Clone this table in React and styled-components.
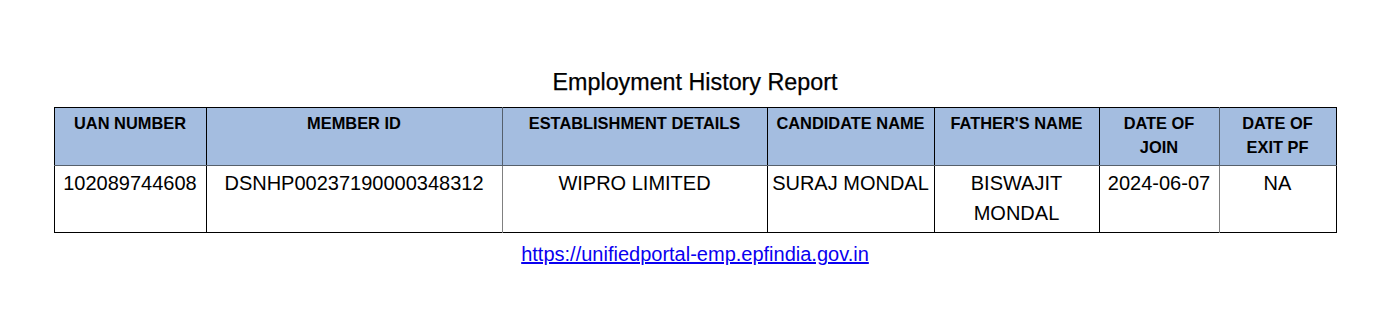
import React from "react";
import styled, { createGlobalStyle } from "styled-components";

const GlobalStyle = createGlobalStyle`
  html, body {
    margin: 0;
    padding: 0;
    background: #ffffff;
  }
  body {
    font-family: "Liberation Sans", Arial, sans-serif;
    color: #000;
  }
`;

const Page = styled.div`
  width: 1395px;
  height: 318px;
  box-sizing: border-box;
  padding-top: 68px;
  padding-left: 54px;
`;

const Report = styled.section`
  width: 1282px;
  display: flex;
  flex-direction: column;
  align-items: center;
`;

const Title = styled.h1`
  margin: 0 0 11px;
  font-size: 23.3px;
  line-height: 28px;
  font-weight: 400;
  text-align: center;
  color: #000;
  -webkit-text-stroke: 0.25px #000;
`;

const Table = styled.table`
  width: 1282px;
  table-layout: fixed;
  border-collapse: collapse;
  border: 1px solid #000;
`;

const HeadCell = styled.th`
  background: #a4bde0;
  font-size: 16.4px;
  line-height: 24px;
  font-weight: 700;
  text-align: center;
  vertical-align: top;
  padding: 3px 6px 6px;
  border-left: 1px solid ${(p) => (p.$soft ? "#55606d" : "#000")};
  border-bottom: 1px solid #56606b;
`;

const Cell = styled.td`
  font-size: 20px;
  line-height: 30px;
  text-align: center;
  vertical-align: top;
  padding: 2px 4px 4px;
  border-left: 1px solid ${(p) => (p.$soft ? "#808080" : "#000")};
`;

const PortalLink = styled.a`
  margin-top: 9px;
  font-size: 20px;
  line-height: 24px;
  color: #0a00f0;
  text-decoration: underline;
`;

const columns = [
  { key: "uan", label: "UAN NUMBER", width: 152 },
  { key: "member", label: "MEMBER ID", width: 296 },
  { key: "est", label: "ESTABLISHMENT DETAILS", width: 265, soft: true },
  { key: "name", label: "CANDIDATE NAME", width: 167 },
  { key: "father", label: "FATHER'S NAME", width: 165 },
  { key: "doj", label: "DATE OF JOIN", width: 120 },
  { key: "doe", label: "DATE OF EXIT PF", width: 117, soft: true },
];

const row = {
  uan: "102089744608",
  member: "DSNHP00237190000348312",
  est: "WIPRO LIMITED",
  name: "SURAJ MONDAL",
  father: "BISWAJIT MONDAL",
  doj: "2024-06-07",
  doe: "NA",
};

export default function App() {
  return (
    <>
      <GlobalStyle />
      <Page>
        <Report>
          <Title>Employment History Report</Title>
          <Table>
            <colgroup>
              {columns.map((c) => (
                <col key={c.key} style={{ width: c.width }} />
              ))}
            </colgroup>
            <thead>
              <tr>
                {columns.map((c) => (
                  <HeadCell key={c.key} $soft={c.soft}>
                    {c.label}
                  </HeadCell>
                ))}
              </tr>
            </thead>
            <tbody>
              <tr>
                {columns.map((c) => (
                  <Cell key={c.key} $soft={c.soft}>
                    {row[c.key]}
                  </Cell>
                ))}
              </tr>
            </tbody>
          </Table>
          <PortalLink href="https://unifiedportal-emp.epfindia.gov.in">
            https://unifiedportal-emp.epfindia.gov.in
          </PortalLink>
        </Report>
      </Page>
    </>
  );
}
